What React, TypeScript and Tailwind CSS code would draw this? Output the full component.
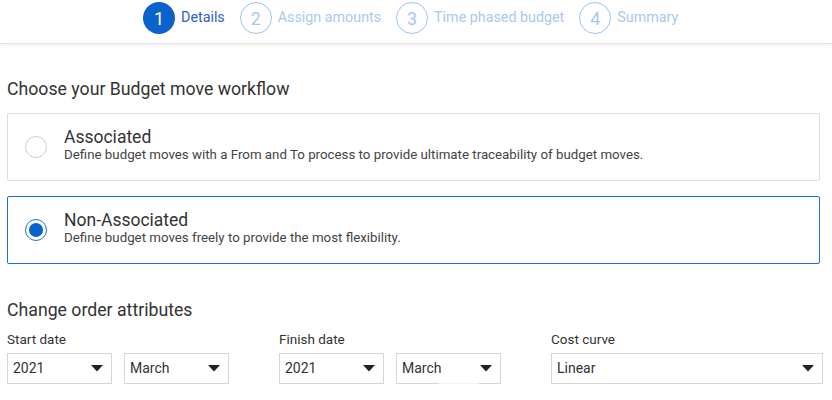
import React from "react";

const Caret = () => (
  <svg width="12" height="7" viewBox="0 0 12 7" className="shrink-0">
    <path d="M0 0 L12 0 L6 6.5 Z" fill="#222" />
  </svg>
);

function Select({ value, w }: { value: string; w: string }) {
  return (
    <div className={`${w} h-[31px] border border-[#d6d6d6] bg-white flex items-center justify-between pl-[5px] pr-[8px] text-[14px] text-[#333]`}>
      <span>{value}</span>
      <Caret />
    </div>
  );
}

function Step({ n, label, active }: { n: number; label: string; active?: boolean }) {
  return (
    <div className="flex items-center gap-[6px]">
      <div
        className={
          active
            ? "w-[32px] h-[32px] rounded-full bg-[#0a63cc] text-white flex items-center justify-center text-[18px]"
            : "w-[32px] h-[32px] rounded-full border border-[#9ec4ef] text-[#a9c9ef] flex items-center justify-center text-[18px]"
        }
      >
        {n}
      </div>
      <span className={active ? "text-[14.3px] text-[#2d62c8]" : "text-[14.3px] text-[#a9c9ef]"}>{label}</span>
    </div>
  );
}

export default function App() {
  return (
    <div className="w-[832px] h-[400px] bg-white overflow-hidden" style={{ fontFamily: "Roboto, 'Liberation Sans', sans-serif" }}>
      <div className="h-[44px] border-b border-[#e2e2e2] shadow-[0_2px_4px_rgba(0,0,0,0.06)] flex items-start pt-[2px] pl-[143px] gap-[15px]">
        <Step n={1} label="Details" active />
        <Step n={2} label="Assign amounts" />
        <Step n={3} label="Time phased budget" />
        <Step n={4} label="Summary" />
      </div>

      <div className="px-[7px] pr-[12px]">
        <div className="mt-[34px] text-[17.7px] text-[#333] leading-[22px]">Choose your Budget move workflow</div>

        <div className="mt-[13px] h-[68px] border border-[#dedede] rounded-[2px] flex items-center">
          <div className="ml-[17px] w-[22px] h-[22px] rounded-full border-[1.5px] border-[#d0d0d0]" />
          <div className="ml-[17px] -mt-[4px]">
            <div className="text-[17.5px] leading-[19px] text-[#333]">Associated</div>
            <div className="text-[13.3px] leading-[15px] text-[#444]">Define budget moves with a From and To process to provide ultimate traceability of budget moves.</div>
          </div>
        </div>

        <div className="mt-[15px] h-[68px] border border-[#1f6fd1] rounded-[2px] flex items-center">
          <div className="ml-[17px] w-[22px] h-[22px] rounded-full border-[1.5px] border-[#1f6fd1] flex items-center justify-center">
            <div className="w-[14px] h-[14px] rounded-full bg-[#0a63cc]" />
          </div>
          <div className="ml-[17px] -mt-[4px]">
            <div className="text-[17.5px] leading-[19px] text-[#333]">Non-Associated</div>
            <div className="text-[13.3px] leading-[15px] text-[#444]">Define budget moves freely to provide the most flexibility.</div>
          </div>
        </div>

        <div className="mt-[35px] text-[17.7px] text-[#333] leading-[22px]">Change order attributes</div>

        <div className="mt-[10px] grid grid-cols-[272px_272px_272px]">
          <div>
            <div className="text-[13.5px] text-[#333] leading-[16px]">Start date</div>
            <div className="mt-[6px] flex gap-[12px]">
              <Select value="2021" w="w-[105px]" />
              <Select value="March" w="w-[105px]" />
            </div>
          </div>
          <div>
            <div className="text-[13.5px] text-[#333] leading-[16px]">Finish date</div>
            <div className="mt-[6px] flex gap-[12px]">
              <Select value="2021" w="w-[105px]" />
              <div className="relative">
                <Select value="March" w="w-[105px]" />
                <div className="absolute left-[43px] bottom-0 w-[40px] h-[1px] bg-[#f4f4f4]" />
              </div>
            </div>
          </div>
          <div>
            <div className="text-[13.5px] text-[#333] leading-[16px]">Cost curve</div>
            <div className="mt-[6px]">
              <Select value="Linear" w="w-[272px]" />
            </div>
          </div>
        </div>
      </div>
    </div>
  );
}
